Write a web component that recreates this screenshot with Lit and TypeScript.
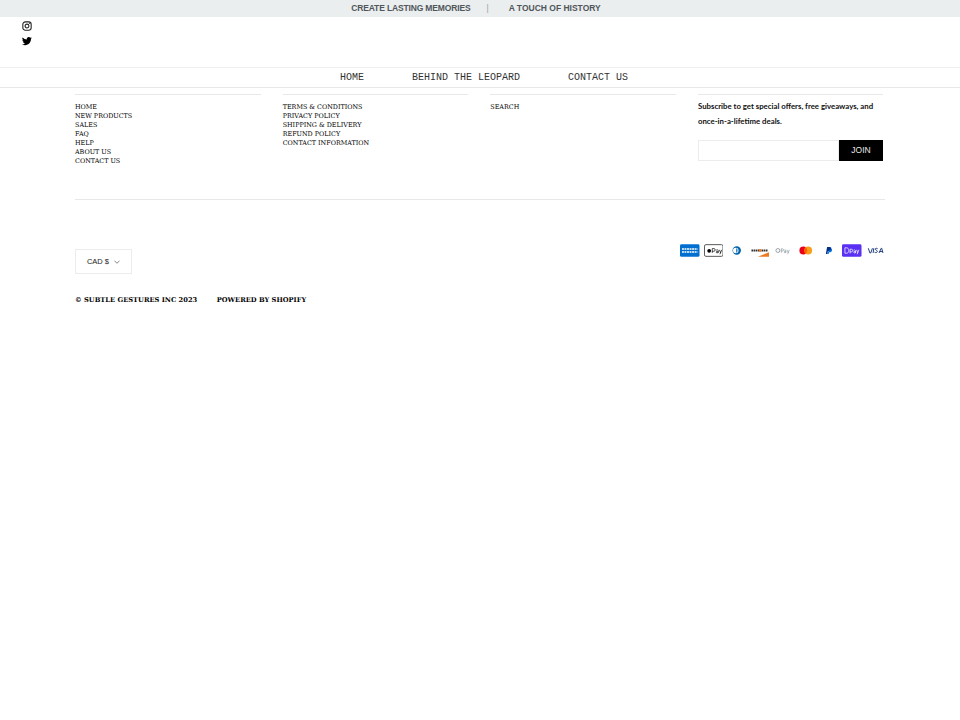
import { LitElement, html, css } from "lit";
import { customElement } from "lit/decorators.js";

const cols = [
  ["HOME", "NEW PRODUCTS", "SALES", "FAQ", "HELP", "ABOUT US", "CONTACT US"],
  ["TERMS & CONDITIONS", "PRIVACY POLICY", "SHIPPING & DELIVERY", "REFUND POLICY", "CONTACT INFORMATION"],
  ["SEARCH"],
];

@customElement("app-root")
export class AppRoot extends LitElement {
  static styles = css`
    :host { display: block; background: #fff; min-height: 720px; color: #000; font-family: "Liberation Sans", sans-serif; }
    a { color: inherit; text-decoration: none; }
    .bar { height: 17px; background: #ebeeef; display: flex; justify-content: center; align-items: center; padding-right: 8px; font: bold 8.5px/17px "Liberation Sans", sans-serif; color: #50565a; }
    .bar .first { letter-spacing: -0.15px; }
    .bar .sep { font-weight: normal; color: #9aa0a4; margin: 0 20px 0 16px; }
    .social { height: 50px; padding: 4px 0 0 22px; box-sizing: border-box; display: flex; flex-direction: column; gap: 5px; }
    .social svg { display: block; width: 10px; height: 10px; }
    .nav { height: 19px; border-top: 1px solid #eee; border-bottom: 1px solid #e8e8e8; display: flex; justify-content: center; gap: 48px; font: 10px/19px "Liberation Mono", monospace; color: #333; padding-left: 8px; }
    .nav a { display: block; }
    .footer { margin: 6px 75px 0; width: 810px; }
    .cols { display: grid; grid-template-columns: repeat(4, 185.67px); column-gap: 22px; height: 105px; border-bottom: 1px solid #e8e8e8; }
    .col { border-top: 1px solid #e8e8e8; padding-top: 8px; }
    .col.sub { width: 185px; padding-top: 4px; }
    .links { display: flex; flex-direction: column; font: 6.4px/9px "DejaVu Serif", serif; color: #000; }
    .sub p { margin: 0; font: bold 7.8px/15px "Lato", sans-serif; color: #111; }
    .form { display: flex; margin-top: 11px; height: 21px; width: 185px; }
    .input { flex: 1; border: 1px solid #ececec; }
    .join { width: 44px; background: #000; color: #e8e8e8; font: 8.5px/20px "Liberation Sans", sans-serif; text-align: center; }
    .row { display: flex; justify-content: space-between; margin-top: 44px; }
    .cur { width: 57px; height: 25px; box-sizing: border-box; margin-top: 5px; border: 1px solid #ececec; display: flex; align-items: center; justify-content: center; gap: 5px; font: 7.5px/1 "Liberation Sans", sans-serif; color: #222; }
    .cur svg { width: 6px; height: 4px; }
    .pay { display: flex; gap: 3.65px; height: 15px; }
    .pay svg { width: 19.5px; height: 13px; display: block; }
    .legal { margin-top: 21px; display: flex; gap: 19.5px; font: bold 6.7px/10px "DejaVu Serif", serif; }
  `;

  render() {
    return html`
      <div class="bar"><span class="first">CREATE LASTING MEMORIES</span><span class="sep">|</span><span>A TOUCH OF HISTORY</span></div>
      <div class="social">
        <svg viewBox="0 0 24 24" fill="none" stroke="#222" stroke-width="2.6"><rect x="2" y="2" width="20" height="20" rx="6"/><circle cx="12" cy="12" r="4.6"/><circle cx="18" cy="6" r="1.2" fill="#222" stroke="none"/></svg>
        <svg viewBox="0 0 24 24" fill="#000"><path d="M23.6 4.9a9.6 9.6 0 0 1-2.8.8 4.8 4.8 0 0 0 2.1-2.7 9.7 9.7 0 0 1-3 1.2 4.8 4.8 0 0 0-8.3 4.4A13.7 13.7 0 0 1 1.6 3.5a4.8 4.8 0 0 0 1.5 6.5 4.8 4.8 0 0 1-2.2-.6c0 2.4 1.7 4.4 3.9 4.9a4.8 4.8 0 0 1-2.2.1 4.8 4.8 0 0 0 4.5 3.4A9.7 9.7 0 0 1 0 19.8 13.7 13.7 0 0 0 7.5 22c9.1 0 14.3-7.7 14-14.6a9.8 9.8 0 0 0 2.1-2.5z"/></svg>
      </div>
      <nav class="nav"><a>HOME</a><a>BEHIND THE LEOPARD</a><a>CONTACT US</a></nav>
      <div class="footer">
        <div class="cols">
          ${cols.map((c) => html`<div class="col"><div class="links">${c.map((l) => html`<a>${l}</a>`)}</div></div>`)}
          <div class="col sub">
            <p>Subscribe to get special offers, free giveaways, and once-in-a-lifetime deals.</p>
            <div class="form"><div class="input"></div><div class="join">JOIN</div></div>
          </div>
        </div>
        <div class="row">
          <div class="cur">CAD $ <svg viewBox="0 0 6 4" fill="none" stroke="#555" stroke-width=".7"><path d="M.5.7 3 3.3 5.5.7"/></svg></div>
          <div class="pay">
            <svg viewBox="0 0 20 13"><rect width="20" height="13" rx="1.5" fill="#016fd0"/><path d="M2 5h16M2 8h16" stroke="#fff" stroke-width="1.4" stroke-dasharray="2 .6"/></svg>
            <svg viewBox="0 0 20 13"><rect x=".5" y=".5" width="19" height="12" rx="1.5" fill="#fff" stroke="#555"/><circle cx="5.3" cy="6.8" r="1.9" fill="#000"/><path d="M8.5 9V4.5h1.6a1.3 1.3 0 0 1 0 2.8H8.5M12.6 6.2a1.2 1.2 0 0 1 2 .4V9M14.6 7.4h-1.2a.8.8 0 0 0 0 1.6c.6 0 1.2-.4 1.2-1M15.8 5.8l1.3 3.2M18.2 5.8l-1.9 4.6" fill="none" stroke="#000" stroke-width=".7"/></svg>
            <svg viewBox="0 0 20 13"><rect width="20" height="13" fill="#fff"/><circle cx="10" cy="6.5" r="4.3" fill="#0165ac"/><circle cx="9" cy="6.5" r="2.8" fill="#fff"/><path d="M9.5 4.2v4.6c1.7-.6 1.7-4 0-4.6z" fill="#0165ac"/></svg>
            <svg viewBox="0 0 20 13"><rect width="20" height="13" fill="#fff"/><path d="M8 13 20 8v5z" fill="#ed7b25"/><path d="M1.5 6.5h17" stroke="#333" stroke-width="1.8" stroke-dasharray="1.6 .5"/><circle cx="10.5" cy="6.5" r="1.5" fill="#ed7b25"/></svg>
            <svg viewBox="0 0 20 13"><rect width="20" height="13" fill="#fff"/><circle cx="5" cy="6.5" r="2" fill="none" stroke="#7c8a8e" stroke-width=".8"/><path d="M8.5 4.6v4.2M8.5 4.8h1.2a1 1 0 0 1 0 2.2H8.5M11.5 6.2a1.1 1.1 0 0 1 1.7.3V8.8M13.2 7.4h-1a.7.7 0 0 0 0 1.4c.5 0 1-.3 1-.9M14.4 5.8l1.2 3M16.8 5.8l-1.8 4.4" fill="none" stroke="#7c8a8e" stroke-width=".6"/></svg>
            <svg viewBox="0 0 20 13"><rect width="20" height="13" fill="#fff"/><circle cx="7.5" cy="6.5" r="4" fill="#eb001b"/><circle cx="12.5" cy="6.5" r="4" fill="#f79e1b"/><path d="M10 3.4a4 4 0 0 1 0 6.2 4 4 0 0 1 0-6.2z" fill="#ff5f00"/></svg>
            <svg viewBox="0 0 20 13"><rect width="20" height="13" fill="#fff"/><path d="M8.3 3h2.6c1.5 0 2 .9 1.7 2-.3 1.5-1.4 2.2-2.7 2.2h-.8L8.6 10H7z" fill="#003087"/><path d="M12.8 4.8c.6.3.7 1 .5 1.7-.3 1.3-1.3 1.9-2.5 1.9h-.5L9.9 10H8.6l.3-1.6z" fill="#0070e0"/></svg>
            <svg viewBox="0 0 20 13"><rect width="20" height="13" rx="1.5" fill="#5a31f4"/><path d="M3 9.3V3.7h1.4c1.6 0 2.6 1 2.6 2.8S6 9.3 4.4 9.3zM8.3 9.5V5.2h1.3a1.3 1.3 0 0 1 0 2.7H8.3M12 6.3a1.1 1.1 0 0 1 1.8.3v2.6M13.8 7.5h-1a.7.7 0 0 0 0 1.5c.5 0 1-.3 1-.9M15 5.8l1.1 3M17.3 5.8l-1.8 4.5" fill="none" stroke="#fff" stroke-width=".75"/></svg>
            <svg viewBox="0 0 20 13"><rect width="20" height="13" fill="#fff"/><path d="M2.4 4.2 4 9h.9l1.7-4.8M8 4.2 7.3 9M11.9 4.6c-1-.7-2.5-.4-2.4.6.1 1 2.2 1 2.1 2.3-.1 1.2-1.7 1.5-2.8.8M13.4 9l2.2-4.8h.5L17.4 9M14 7.6h2.8" fill="none" stroke="#1b3a7a" stroke-width="1"/></svg>
          </div>
        </div>
        <div class="legal"><span>© SUBTLE GESTURES INC 2023</span><span>POWERED BY SHOPIFY</span></div>
      </div>
    `;
  }
}
